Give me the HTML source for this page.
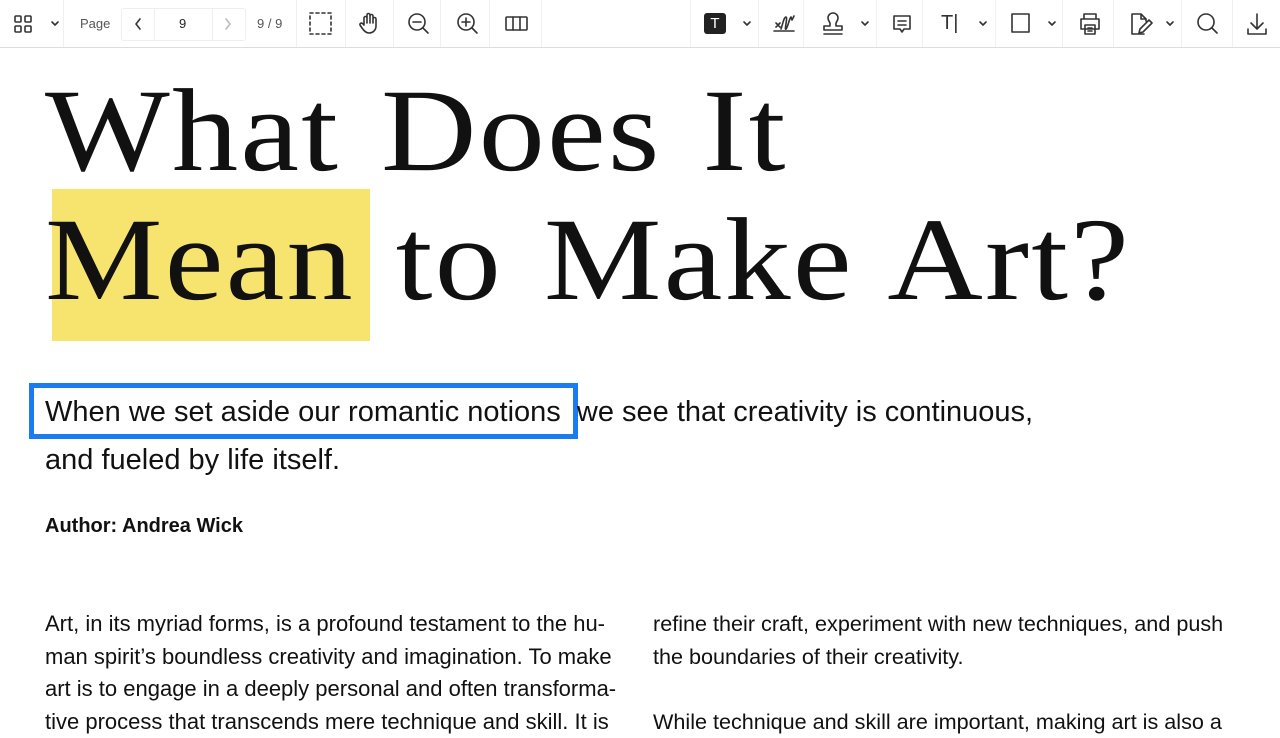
<!DOCTYPE html>
<html><head><style>
body{margin:0;width:1280px;height:721px;overflow:hidden;background:#fff;font-family:"Liberation Sans",sans-serif;position:relative}
.tb{position:absolute;top:0;left:0;width:1280px;height:47px;border-bottom:1px solid #ddd;background:#fff}
.tb>*{position:absolute}
.ic{stroke:#333;fill:none;stroke-width:1.6;stroke-linecap:round;stroke-linejoin:round}
.sep{top:0;width:1px;height:47px;background:#f0f0f0}
h1{position:absolute;left:45px;top:66px;margin:0;font-family:"Liberation Serif",serif;font-weight:normal;font-size:118px;line-height:129px;letter-spacing:2px;word-spacing:5px;color:#111;z-index:2;transform:scaleX(1.12);transform-origin:0 0;white-space:nowrap}
.hl{position:absolute;left:52px;top:189px;width:318px;height:152px;background:#f7e46f}
.sub{position:absolute;left:45px;top:388px;font-size:29px;line-height:48px;color:#111;z-index:2;white-space:nowrap}
.box{position:absolute;left:29px;top:383px;width:539px;height:46px;border:5px solid #1a7cf0}
.au{position:absolute;left:45px;top:515px;font-weight:bold;font-size:20px;color:#111}
.col{position:absolute;top:608px;width:580px;font-size:22px;line-height:32.5px;color:#111;white-space:nowrap}
</style></head><body>
<div class="tb">
<svg style="left:14px;top:15px" width="18" height="18" class="ic"><rect x="1" y="1" width="6" height="6" rx="1"/><rect x="11" y="1" width="6" height="6" rx="1"/><rect x="1" y="11" width="6" height="6" rx="1"/><rect x="11" y="11" width="6" height="6" rx="1"/></svg>
<svg style="left:50px;top:20px" width="10" height="8" class="ic"><path d="M2 2l3 3 3-3"/></svg>
<div class="sep" style="left:63px"></div>
<span style="left:80px;top:16px;font-size:13px;color:#555">Page</span>
<div style="left:121px;top:8px;width:123px;height:31px;border:1px solid #eee;border-radius:3px"></div>
<div style="left:154px;top:8px;width:1px;height:32px;background:#eee"></div>
<div style="left:212px;top:8px;width:1px;height:32px;background:#eee"></div>
<svg style="left:133px;top:17px" width="10" height="14" class="ic"><path d="M7 2L3 7l4 5"/></svg>
<span style="left:179px;top:16px;font-size:13px;color:#222">9</span>
<svg style="left:223px;top:17px" width="10" height="14" class="ic"><path d="M3 2l4 5-4 5" stroke="#bbb"/></svg>
<span style="left:257px;top:16px;font-size:13px;color:#555">9 / 9</span>
<div class="sep" style="left:296px"></div>
<svg style="left:308px;top:11px" width="26" height="26" class="ic"><rect x="2" y="2" width="21" height="21" stroke-dasharray="3 3"/></svg>
<div class="sep" style="left:345px"></div>
<svg style="left:357px;top:11px" width="24" height="24" class="ic"><path d="M7 13V7a1.5 1.5 0 013 0v5V4a1.5 1.5 0 013 0v8V5a1.5 1.5 0 013 0v7V8a1.5 1.5 0 013 0v7c0 4-3 7-7 7-3 0-5-2-7-5l-2-3a1.5 1.5 0 012.5-1.5L7 14"/></svg>
<div class="sep" style="left:393px"></div>
<svg style="left:407px;top:12px" width="24" height="24" class="ic"><circle cx="10" cy="10" r="8"/><path d="M6 10h8M16 16l5 5"/></svg>
<div class="sep" style="left:440px"></div>
<svg style="left:456px;top:12px" width="24" height="24" class="ic"><circle cx="10" cy="10" r="8"/><path d="M6 10h8M10 6v8M16 16l5 5"/></svg>
<div class="sep" style="left:489px"></div>
<svg style="left:505px;top:15px" width="24" height="18" class="ic"><rect x="1" y="2" width="21" height="13" rx="1"/><path d="M8 2v13M15 2v13"/></svg>
<div class="sep" style="left:541px"></div>

<div class="sep" style="left:690px"></div>
<div style="left:704px;top:13px;width:22px;height:21px;background:#222;border-radius:3px;color:#fff;font-size:15px;text-align:center;line-height:21px">T</div>
<svg style="left:742px;top:20px" width="10" height="8" class="ic"><path d="M2 2l3 3 3-3"/></svg>
<div class="sep" style="left:758px"></div>
<svg style="left:771px;top:11px" width="26" height="26" class="ic"><path d="M3 20h20M5 12l4 4M9 12l-4 4M10 18c2-6 3-12 5-12s-2 14 0 12 3-10 5-12l1 3 2-4"/></svg>
<div class="sep" style="left:803px"></div>
<svg style="left:820px;top:11px" width="26" height="26" class="ic"><path d="M10 12c-1-2-2-3-2-5a5 5 0 0110 0c0 2-1 3-2 5v3h6v4H4v-4h6zM4 23h18"/></svg>
<svg style="left:860px;top:20px" width="10" height="8" class="ic"><path d="M2 2l3 3 3-3"/></svg>
<div class="sep" style="left:876px"></div>
<svg style="left:890px;top:12px" width="24" height="24" class="ic"><path d="M4 4h16v13h-6l-2 3-2-3H4zM8 9h8M8 13h8"/></svg>
<div class="sep" style="left:922px"></div>
<span style="left:941px;top:12px;font-size:20px;color:#333">T|</span>
<svg style="left:978px;top:20px" width="10" height="8" class="ic"><path d="M2 2l3 3 3-3"/></svg>
<div class="sep" style="left:995px"></div>
<svg style="left:1010px;top:12px" width="22" height="22" class="ic"><rect x="2" y="2" width="17" height="18"/></svg>
<svg style="left:1047px;top:20px" width="10" height="8" class="ic"><path d="M2 2l3 3 3-3"/></svg>
<div class="sep" style="left:1062px"></div>
<svg style="left:1077px;top:11px" width="26" height="26" class="ic"><path d="M7 8V3h12v5M4 8h18v10H4zM8 14h10v9H8zM11 17h4M11 20h4"/></svg>
<div class="sep" style="left:1113px"></div>
<svg style="left:1127px;top:11px" width="26" height="26" class="ic"><path d="M14 3H5v20h12M14 3l5 5v2M14 3v5h5M12 22l1-4 9-9 3 3-9 9z"/></svg>
<svg style="left:1165px;top:20px" width="10" height="8" class="ic"><path d="M2 2l3 3 3-3"/></svg>
<div class="sep" style="left:1181px"></div>
<svg style="left:1196px;top:12px" width="24" height="24" class="ic"><circle cx="10" cy="10" r="8"/><path d="M16 16l5 5"/></svg>
<div class="sep" style="left:1232px"></div>
<svg style="left:1245px;top:11px" width="24" height="26" class="ic"><path d="M12 3v15M6 12l6 6 6-6M3 18v5h18v-5"/></svg>
</div>

<div class="hl"></div>
<h1>What Does It<br>Mean to Make Art?</h1>
<div class="box"></div>
<div class="sub">When we set aside our romantic notions &nbsp;we see that creativity is continuous,<br>and fueled by life itself.</div>
<div class="au">Author: Andrea Wick</div>
<div class="col" style="left:45px">Art, in its myriad forms, is a profound testament to the hu-<br>man spirit’s boundless creativity and imagination. To make<br>art is to engage in a deeply personal and often transforma-<br>tive process that transcends mere technique and skill. It is</div>
<div class="col" style="left:653px;font-size:21.6px">refine their craft, experiment with new techniques, and push<br>the boundaries of their creativity.<br><br>While technique and skill are important, making art is also a</div>
</body></html>
